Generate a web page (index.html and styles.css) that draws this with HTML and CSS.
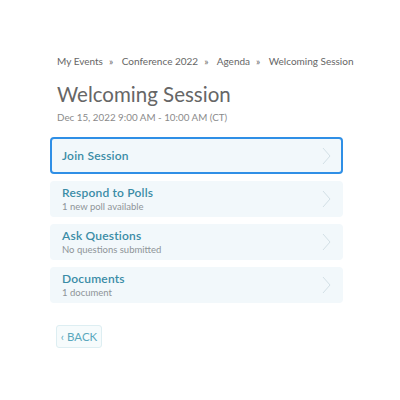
FILE: index.html
```html
<!DOCTYPE html>
<html>
<head>
<meta charset="utf-8">
<link rel="stylesheet" href="styles.css">
</head>
<body>
<div class="page">
  <nav class="crumbs">
    <span>My Events</span><span class="sep">»</span>
    <span>Conference 2022</span><span class="sep">»</span>
    <span>Agenda</span><span class="sep">»</span>
    <span>Welcoming Session</span>
  </nav>
  <h1 class="title">Welcoming Session</h1>
  <div class="date">Dec 15, 2022 9:00 AM - 10:00 AM (CT)</div>
  <div class="list">
    <div class="card active">
      <div class="text"><div class="name">Join Session</div></div>
      <svg class="chev" width="9" height="18" viewBox="0 0 9 18"><path d="M1 1 L8 9 L1 17" fill="none" stroke="#d3e0e6" stroke-width="1"/></svg>
    </div>
    <div class="card">
      <div class="text"><div class="name">Respond to Polls</div><div class="sub">1 new poll available</div></div>
      <svg class="chev" width="9" height="18" viewBox="0 0 9 18"><path d="M1 1 L8 9 L1 17" fill="none" stroke="#d3e0e6" stroke-width="1"/></svg>
    </div>
    <div class="card">
      <div class="text"><div class="name">Ask Questions</div><div class="sub">No questions submitted</div></div>
      <svg class="chev" width="9" height="18" viewBox="0 0 9 18"><path d="M1 1 L8 9 L1 17" fill="none" stroke="#d3e0e6" stroke-width="1"/></svg>
    </div>
    <div class="card">
      <div class="text"><div class="name">Documents</div><div class="sub">1 document</div></div>
      <svg class="chev" width="9" height="18" viewBox="0 0 9 18"><path d="M1 1 L8 9 L1 17" fill="none" stroke="#d3e0e6" stroke-width="1"/></svg>
    </div>
  </div>
  <button class="back">‹ BACK</button>
</div>
</body>
</html>
```
FILE: styles.css
```css
* { box-sizing: border-box; }
html, body { margin: 0; padding: 0; background: #fff; }
body { font-family: Lato, "Open Sans", sans-serif; }
.page { padding: 55px 57px 0 50px; width: 400px; }
.crumbs { font-size: 10px; color: #666; padding-left: 7px; white-space: nowrap; line-height: 13px; }
.crumbs .sep { margin: 0 6px; }
.title { margin: 13px 0 0 7px; font-size: 20.5px; font-weight: 400; color: #666; line-height: 26px; }
.date { margin: 4px 0 0 7px; font-size: 9.8px; color: #8a8a8a; line-height: 13px; }
.list { margin-top: 13px; display: flex; flex-direction: column; gap: 7px; width: 293px; }
.card { height: 36px; background: #f2f8fb; border-radius: 4px; display: flex; align-items: center; justify-content: space-between; padding: 0 12px 0 12px; }
.card.active { height: 37px; border: 2px solid #2f8fe6; padding: 0 10px 0 10px; }
.name { font-size: 12px; font-weight: 600; color: #3a8ca6; line-height: 15px; letter-spacing: 0.2px; }
.sub { font-size: 9.5px; color: #8e9498; line-height: 13px; }
.chev { display: block; }
.back { margin: 22px 0 0 6px; height: 23px; width: 46px; padding: 0; background: #f6fbfc; border: 1px solid #ddeef2; border-radius: 3px; color: #5aa8bd; font-family: Lato, sans-serif; font-size: 11.5px; }
```
